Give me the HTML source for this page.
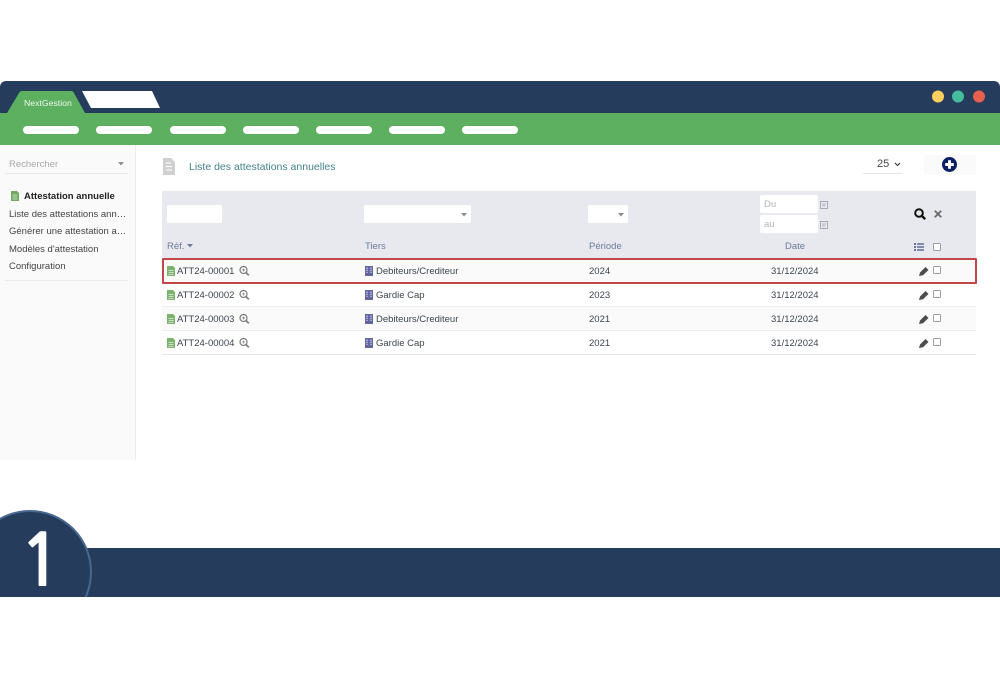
<!DOCTYPE html>
<html><head><meta charset="utf-8"><style>
html,body{margin:0;padding:0;background:#fff}
body{width:1000px;height:679px;position:relative;overflow:hidden;font-family:"Liberation Sans",sans-serif;font-size:9.500px;color:#3a4048}
.a{position:absolute;white-space:nowrap}
.pill{position:absolute;top:126px;width:56px;height:8px;border-radius:4px;background:#fff}
.inp{position:absolute;background:#fff;border-radius:2px}
.hd{position:absolute;top:241px;color:#6f7a9e;font-size:9.500px;line-height:11px;white-space:nowrap}
.rl{position:absolute;left:162px;width:814px;height:24px}
.cb{position:absolute;box-sizing:border-box;width:8px;height:8px;border:1px solid #9a9ea4;border-radius:1.500px;background:#fff}
.t{position:absolute;font-size:9.500px;line-height:12px;white-space:nowrap;color:#3c4550}
.m{position:absolute;left:9px;font-size:9.500px;line-height:12px;color:#444;white-space:nowrap}
svg{position:absolute;overflow:visible}
</style></head><body>
<div class="a" style="left:0;top:81px;width:1000px;height:32px;background:#253c5c;border-radius:6px 6px 0 0"></div>
<div class="a" style="left:0;top:113px;width:1000px;height:32px;background:#5cb05f"></div>
<svg style="left:0;top:0" width="1000" height="150">
<path d="M7 113 L19 93 Q20 91 22 91 L71 91 Q73 91 74 93 L85 113 Z" fill="#5cb05f"/>
<path d="M82 91 L152 91 L160 108 L91 108 Z" fill="#fff"/>
<circle cx="938" cy="96.500" r="6" fill="#fdd05e"/><circle cx="958" cy="96.500" r="6" fill="#45bd9c"/><circle cx="979" cy="96.500" r="6" fill="#e5604f"/>
</svg>
<div class="a" style="left:24px;top:98px;color:#eef7ee;font-size:8.700px;line-height:11px">NextGestion</div>
<div class="pill" style="left:23px"></div><div class="pill" style="left:96px"></div><div class="pill" style="left:170px"></div><div class="pill" style="left:243px"></div><div class="pill" style="left:316px"></div><div class="pill" style="left:389px"></div><div class="pill" style="left:462px"></div>

<div class="a" style="left:0;top:145px;width:135px;height:315px;background:#fafafa;border-right:1px solid #ececec"></div>
<div class="a" style="left:9px;top:159px;color:#a8a8a8;font-size:9.500px;line-height:12px">Rechercher</div>
<svg style="left:118px;top:162px" width="6" height="4"><path d="M0 0H6L3 3.500Z" fill="#909090"/></svg>
<div class="a" style="left:5px;top:173px;width:123px;height:1px;background:#e8e8e8"></div>
<svg style="left:11px;top:191px" width="8" height="10"><path d="M0 0H6L8 2V10H0Z" fill="#6fa860"/><path d="M1.500 4H6.500M1.500 6H6.500M1.500 8H6.500" stroke="#dcebd6" stroke-width=".7"/></svg>
<div class="a" style="left:24px;top:191px;font-size:9.500px;line-height:12px;font-weight:bold;color:#222">Attestation annuelle</div>
<div class="m" style="top:209px">Liste des attestations ann…</div>
<div class="m" style="top:226px">Générer une attestation a…</div>
<div class="m" style="top:244px">Modèles d'attestation</div>
<div class="m" style="top:261px">Configuration</div>
<div class="a" style="left:5px;top:280px;width:123px;height:1px;background:#e8e8e8"></div>

<svg style="left:163px;top:158px" width="12" height="17"><path d="M0 0H8L12 4V17H0Z" fill="#d0d0d0"/><path d="M3 5H8M3 8.500H9M3 12H9" stroke="#fff" stroke-width="1"/></svg>
<div class="a" style="left:189px;top:161px;font-size:10.500px;line-height:13px;color:#44828a">Liste des attestations annuelles</div>
<div class="a" style="left:877px;top:158px;font-size:11px;line-height:13px;color:#444">25</div>
<svg style="left:894px;top:162px" width="7" height="5"><path d="M1 1L3.500 3.500L6 1" fill="none" stroke="#333" stroke-width="1.100"/></svg>
<div class="a" style="left:863px;top:173px;width:40px;height:1px;background:#e6e6e6"></div>
<div class="a" style="left:924px;top:155px;width:52px;height:20px;background:#fafafa"></div>
<svg style="left:942px;top:157px" width="15" height="15"><circle cx="7.500" cy="7.500" r="7.500" fill="#0d1f63"/><path d="M7.500 3.200V11.800M3.200 7.500H11.800" stroke="#fff" stroke-width="3"/></svg>

<div class="a" style="left:162px;top:191px;width:814px;height:67px;background:#e8e9ee"></div>
<div class="inp" style="left:167px;top:205px;width:55px;height:18px"></div>
<div class="inp" style="left:364px;top:205px;width:107px;height:18px"></div>
<svg style="left:461px;top:213px" width="6" height="4"><path d="M0 0H6L3 3.500Z" fill="#8a8a8a"/></svg>
<div class="inp" style="left:588px;top:205px;width:40px;height:18px"></div>
<svg style="left:618px;top:213px" width="6" height="4"><path d="M0 0H6L3 3.500Z" fill="#8a8a8a"/></svg>
<div class="inp" style="left:760px;top:195px;width:58px;height:18px"></div>
<div class="inp" style="left:760px;top:215px;width:58px;height:18px"></div>
<div class="a" style="left:764px;top:199px;color:#b4b4b4;font-size:9.500px;line-height:12px">Du</div>
<div class="a" style="left:764px;top:219px;color:#b4b4b4;font-size:9.500px;line-height:12px">au</div>
<svg style="left:820px;top:201px" width="8" height="8"><rect x=".5" y=".5" width="7" height="7" fill="#eceaf0" stroke="#aaa9b8"/><path d="M2 3H6M2 5H5" stroke="#999" stroke-width=".7"/></svg>
<svg style="left:820px;top:221px" width="8" height="8"><rect x=".5" y=".5" width="7" height="7" fill="#eceaf0" stroke="#aaa9b8"/><path d="M2 3H6M2 5H5" stroke="#999" stroke-width=".7"/></svg>
<svg style="left:914px;top:208px" width="12" height="12"><circle cx="5" cy="5" r="3.800" fill="none" stroke="#111" stroke-width="2"/><path d="M8 8L11.200 11.200" stroke="#111" stroke-width="2.400"/></svg>
<svg style="left:934px;top:210px" width="8" height="8"><path d="M.8 .8L7.200 7.200M7.200 .8L.8 7.200" stroke="#6a6a6a" stroke-width="1.800"/></svg>

<div class="hd" style="left:167px">Réf.</div>
<svg style="left:187px;top:244px" width="6" height="4"><path d="M0 0H6L3 3.500Z" fill="#6f7a9e"/></svg>
<div class="hd" style="left:365px">Tiers</div>
<div class="hd" style="left:589px">Période</div>
<div class="hd" style="left:785px">Date</div>
<svg style="left:914px;top:243px" width="10" height="8"><path d="M3 1H10M3 4H10M3 7H10" stroke="#1c2f70" stroke-width="1"/><path d="M0 1H2M0 4H2M0 7H2" stroke="#1c2f70" stroke-width="1.200"/></svg>
<div class="cb" style="left:933px;top:243px"></div>

<div class="rl" style="top:259px;background:#fafafa"></div>
<div class="rl" style="top:283px;background:#fff;border-bottom:1px solid #eee;height:23px"></div>
<div class="rl" style="top:307px;background:#fafafa;border-bottom:1px solid #eee;height:23px"></div>
<div class="rl" style="top:331px;background:#fff;border-bottom:1px solid #e8e8e8;height:23px"></div>

<svg style="left:0;top:0" width="1000" height="360">
<g id="r1"><path d="M167 266H173L175 268V276H167Z" fill="#7cb36c"/><path d="M168.500 270.500H173.500M168.500 272.500H173.500M168.500 274.500H173.500" stroke="#e5f0e0" stroke-width=".7"/><circle cx="243.500" cy="270" r="3.500" fill="none" stroke="#7c7c7c" stroke-width="1.200"/><path d="M246 272.500L248.800 275.300" stroke="#7c7c7c" stroke-width="1.700"/><path d="M242 270H245M243.500 268.500V271.500" stroke="#7c7c7c" stroke-width=".7"/><path d="M365 266H373V276H365Z" fill="#62679f"/><path d="M367 267.500V273M371 267.500V273" stroke="#d5d7ea" stroke-width="1.200" stroke-dasharray="1.500 .8"/><path d="M919 276L920 272.500L925.500 267L928.500 270L923 275.200Z" fill="#4c4c4c"/></g>
<use href="#r1" y="24"/><use href="#r1" y="48"/><use href="#r1" y="72"/>
</svg>

<div class="t" style="left:177px;top:266px">ATT24-00001</div><div class="t" style="left:376px;top:266px">Debiteurs/Crediteur</div><div class="t" style="left:589px;top:266px">2024</div><div class="t" style="left:771px;top:266px">31/12/2024</div><div class="cb" style="left:933px;top:266px"></div>
<div class="t" style="left:177px;top:290px">ATT24-00002</div><div class="t" style="left:376px;top:290px">Gardie Cap</div><div class="t" style="left:589px;top:290px">2023</div><div class="t" style="left:771px;top:290px">31/12/2024</div><div class="cb" style="left:933px;top:290px"></div>
<div class="t" style="left:177px;top:314px">ATT24-00003</div><div class="t" style="left:376px;top:314px">Debiteurs/Crediteur</div><div class="t" style="left:589px;top:314px">2021</div><div class="t" style="left:771px;top:314px">31/12/2024</div><div class="cb" style="left:933px;top:314px"></div>
<div class="t" style="left:177px;top:338px">ATT24-00004</div><div class="t" style="left:376px;top:338px">Gardie Cap</div><div class="t" style="left:589px;top:338px">2021</div><div class="t" style="left:771px;top:338px">31/12/2024</div><div class="cb" style="left:933px;top:338px"></div>

<div class="a" style="box-sizing:border-box;left:162px;top:258px;width:815px;height:26px;border:2px solid #c2474a;border-radius:1px"></div>

<div class="a" style="left:0;top:548px;width:1000px;height:49px;background:#253c5c"></div>
<div class="a" style="left:0;top:500px;width:120px;height:97px;overflow:hidden">
<div style="position:absolute;box-sizing:border-box;left:-32px;top:10px;width:124px;height:124px;border-radius:50%;background:#253c5c;border:2px solid #49688f"></div>
<div style="position:absolute;left:19px;top:23px;font-family:'NanumGothic',sans-serif;font-weight:bold;font-size:72px;line-height:76px;color:#fff">1</div>
</div>
</body></html>
